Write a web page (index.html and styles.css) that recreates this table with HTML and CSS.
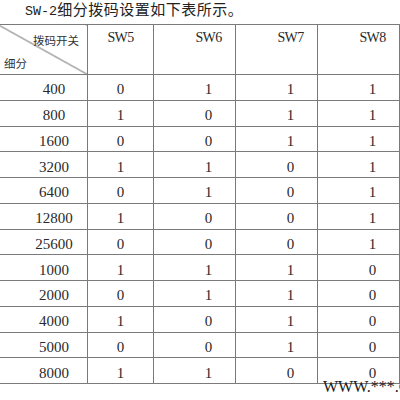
FILE: index.html
```html
<!DOCTYPE html>
<html lang="zh">
<head>
<meta charset="utf-8">
<link rel="stylesheet" href="styles.css">
</head>
<body>
<div class="page">
  <p class="title"><span class="code">SW-2</span><span class="cn">细分拨码设置如下表所示。</span></p>
  <table class="grid">
    <colgroup>
      <col class="c-first"><col class="c-sw5"><col class="c-sw"><col class="c-sw"><col class="c-sw">
    </colgroup>
    <thead>
      <tr class="head">
        <th class="corner">
          <div class="corner-top">拨码开关</div>
          <div class="corner-bottom">细分</div>
        </th>
        <th class="sw5">SW5</th>
        <th class="sw">SW6</th>
        <th class="sw">SW7</th>
        <th class="sw">SW8</th>
      </tr>
    </thead>
    <tbody>
      <tr><td class="step">400</td><td class="sw5">0</td><td class="sw">1</td><td class="sw">1</td><td class="sw">1</td></tr>
      <tr><td class="step">800</td><td class="sw5">1</td><td class="sw">0</td><td class="sw">1</td><td class="sw">1</td></tr>
      <tr><td class="step">1600</td><td class="sw5">0</td><td class="sw">0</td><td class="sw">1</td><td class="sw">1</td></tr>
      <tr><td class="step">3200</td><td class="sw5">1</td><td class="sw">1</td><td class="sw">0</td><td class="sw">1</td></tr>
      <tr><td class="step">6400</td><td class="sw5">0</td><td class="sw">1</td><td class="sw">0</td><td class="sw">1</td></tr>
      <tr><td class="step">12800</td><td class="sw5">1</td><td class="sw">0</td><td class="sw">0</td><td class="sw">1</td></tr>
      <tr><td class="step">25600</td><td class="sw5">0</td><td class="sw">0</td><td class="sw">0</td><td class="sw">1</td></tr>
      <tr><td class="step">1000</td><td class="sw5">1</td><td class="sw">1</td><td class="sw">1</td><td class="sw">0</td></tr>
      <tr><td class="step">2000</td><td class="sw5">0</td><td class="sw">1</td><td class="sw">1</td><td class="sw">0</td></tr>
      <tr><td class="step">4000</td><td class="sw5">1</td><td class="sw">0</td><td class="sw">1</td><td class="sw">0</td></tr>
      <tr><td class="step">5000</td><td class="sw5">0</td><td class="sw">0</td><td class="sw">1</td><td class="sw">0</td></tr>
      <tr><td class="step">8000</td><td class="sw5">1</td><td class="sw">1</td><td class="sw">0</td><td class="sw">0</td></tr>
    </tbody>
  </table>
  <div class="watermark">WWW.***.COM</div>
</div>
</body>
</html>
```

FILE: styles.css
```css
html, body {
  margin: 0;
  padding: 0;
  background: #ffffff;
  overflow: hidden;
}

.page {
  position: relative;
  width: 400px;
  height: 400px;
  overflow: hidden;
  font-family: "Liberation Serif", "Noto Sans CJK SC", serif;
  color: #2a2a2a;
}

.title {
  margin: 0;
  padding-left: 25px;
  height: 24px;
  line-height: 18px;
  color: #222;
  white-space: nowrap;
}

.code {
  font-family: "Liberation Mono", monospace;
  font-size: 13.4px;
}

.cn {
  font-family: "Noto Sans CJK SC", sans-serif;
  font-size: 15px;
  letter-spacing: 0.5px;
}

.grid {
  margin-left: -2px;
  width: 401px;
  table-layout: fixed;
  border-collapse: collapse;
}

.c-first { width: 89px; }
.c-sw5 { width: 66px; }
.c-sw { width: 82px; }

.grid th,
.grid td {
  border: 1px solid #7a7a7a;
  padding: 0;
  font-weight: normal;
  font-size: 15px;
  line-height: 18px;
  text-align: center;
}

.head {
  height: 50px;
}

.head th {
  vertical-align: top;
  padding-top: 4px;
  font-size: 14px;
  letter-spacing: -0.6px;
}

.head th.corner {
  padding: 0;
  letter-spacing: 0;
  background: linear-gradient(to top right,
    transparent calc(50% - 0.8px),
    #555 50%,
    transparent calc(50% + 0.8px));
  font-family: "Noto Sans CJK SC", sans-serif;
  font-size: 11.5px;
  line-height: 14px;
  color: #333;
}

.corner-top {
  text-align: right;
  padding: 8px 8px 0 0;
}

.corner-bottom {
  text-align: left;
  padding: 9px 0 0 5px;
}

.grid tbody tr {
  height: 25.75px;
}

.grid tbody td {
  vertical-align: middle;
  padding-top: 4px;
}

.grid td.step {
  padding-left: 22px;
}

.grid .sw {
  padding-left: 28px;
}

.watermark {
  position: absolute;
  left: 323px;
  top: 378px;
  font-size: 16px;
  line-height: 18px;
  color: #1a1a1a;
  white-space: nowrap;
}
```
